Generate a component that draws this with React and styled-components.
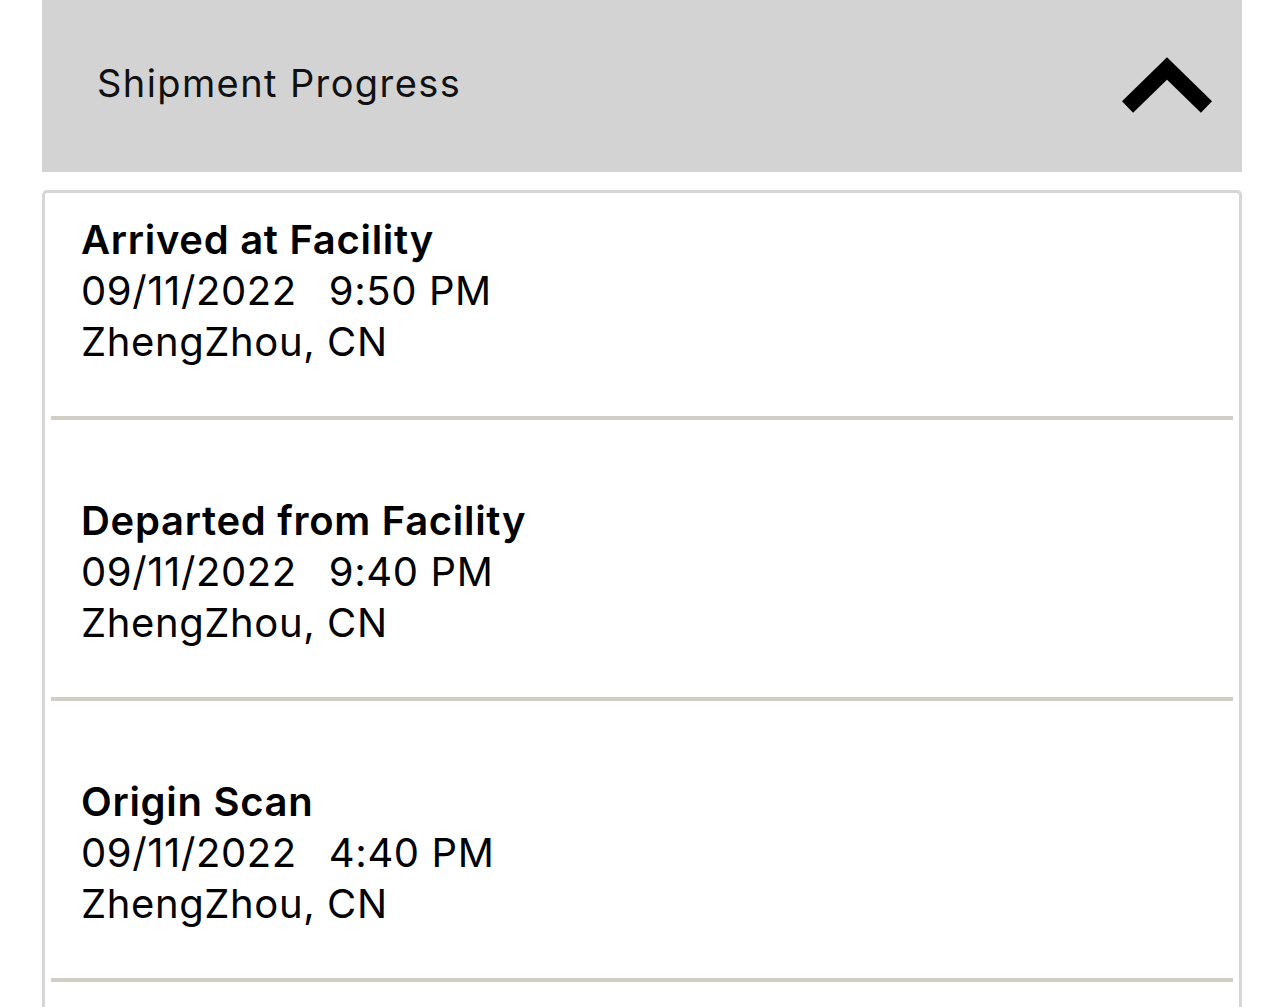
import React from 'react'
import styled, { createGlobalStyle } from 'styled-components'

const GlobalStyle = createGlobalStyle`
  body {
    margin: 0;
    background: #ffffff;
    font-family: Inter, "Noto Sans", "Liberation Sans", sans-serif;
    color: #000;
  }
`

const Page = styled.div`
  padding: 0 42px;
  height: 1007px;
  overflow: hidden;
`

const Header = styled.div`
  height: 172px;
  background: #d3d3d3;
  display: flex;
  align-items: center;
  justify-content: space-between;
  padding: 0 30px 0 55px;
  box-sizing: border-box;
`

const HeaderTitle = styled.h2`
  margin: 0 0 6px;
  font-size: 38px;
  font-weight: 400;
  color: #111;
  letter-spacing: 1.4px;
`

const Chevron = styled.svg`
  display: block;
  margin-top: -2px;
`

const Card = styled.div`
  margin-top: 18px;
  border: 3px solid #d6d6d6;
  border-bottom: none;
  border-radius: 5px 5px 0 0;
  min-height: 900px;
`

const Item = styled.div`
  margin: 0 6px;
  padding: ${p => (p.$first ? '21px' : '75px')} 0 49px 30px;
  border-bottom: 4px solid #d1cdc7;
`

const Line = styled.div`
  font-size: 40px;
  line-height: 51px;
  font-weight: ${p => (p.$bold ? 600 : 400)};
  letter-spacing: ${p => (p.$bold ? '0.7px' : '0.6px')};
  display: flex;
  gap: 32px;
`

const EVENTS = [
  { status: 'Arrived at Facility', date: '09/11/2022', time: '9:50 PM', place: 'ZhengZhou, CN' },
  { status: 'Departed from Facility', date: '09/11/2022', time: '9:40 PM', place: 'ZhengZhou, CN' },
  { status: 'Origin Scan', date: '09/11/2022', time: '4:40 PM', place: 'ZhengZhou, CN' },
]

const App = () => {
  return (
    <Page>
      <GlobalStyle />
      <Header>
        <HeaderTitle>Shipment Progress</HeaderTitle>
        <Chevron width="90" height="56" viewBox="0 0 90 56">
          <polyline
            points="5.5,50 45,11.5 84.5,50"
            fill="none"
            stroke="#000"
            strokeWidth="16"
            strokeLinejoin="miter"
            strokeLinecap="butt"
          />
        </Chevron>
      </Header>
      <Card>
        {EVENTS.map((e, i) => (
          <Item key={i} $first={i === 0}>
            <Line $bold>{e.status}</Line>
            <Line>
              <span>{e.date}</span>
              <span>{e.time}</span>
            </Line>
            <Line>{e.place}</Line>
          </Item>
        ))}
      </Card>
    </Page>
  )
}

export default App
